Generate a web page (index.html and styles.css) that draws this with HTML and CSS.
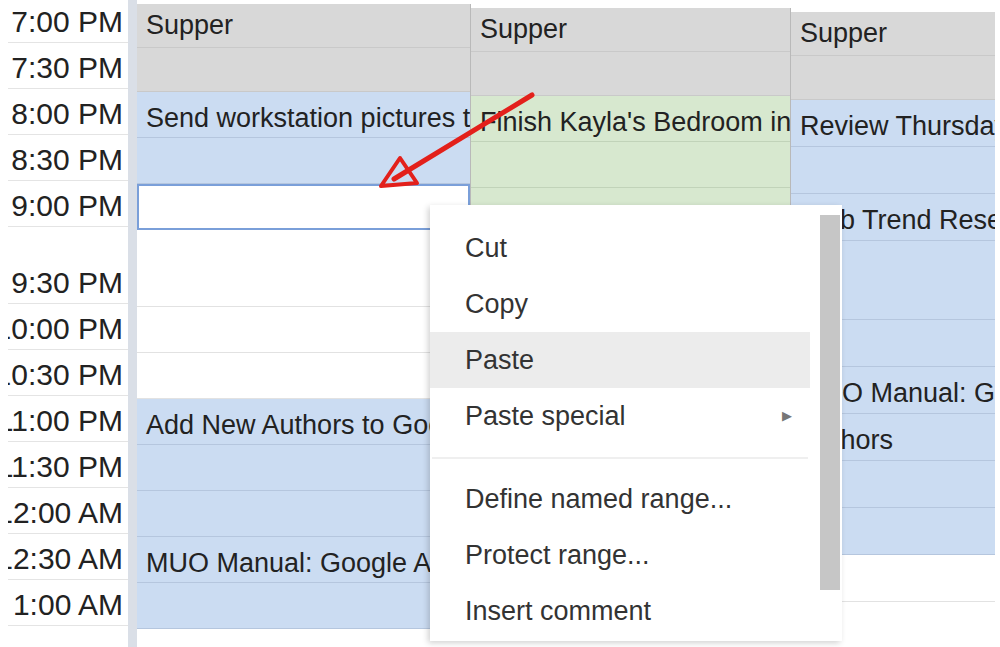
FILE: index.html
```html
<!DOCTYPE html>
<html lang="en">
<head>
    <meta charset="UTF-8">
    <title>Schedule - Paste</title>
    <link rel="stylesheet" href="styles.css">
</head>
<body>

<div class="sheet">
    <!-- time labels -->
    <div class="times">
        <div class="time first">7:00 PM</div>
        <div class="time">7:30 PM</div>
        <div class="time">8:00 PM</div>
        <div class="time">8:30 PM</div>
        <div class="time">9:00 PM</div>
        <div class="time tall">9:30 PM</div>
        <div class="time">10:00 PM</div>
        <div class="time">10:30 PM</div>
        <div class="time">11:00 PM</div>
        <div class="time">11:30 PM</div>
        <div class="time">12:00 AM</div>
        <div class="time">12:30 AM</div>
        <div class="time">1:00 AM</div>
    </div>

    <div class="freeze"></div>

    <div class="col col-a">
        <div class="cell grey hd">Supper</div>
        <div class="cell grey hd"></div>
        <div class="cell blue">Send workstation pictures to Dave</div>
        <div class="cell blue"></div>
        <div class="cell sel"></div>
        <div class="cell tall"></div>
        <div class="cell"></div>
        <div class="cell"></div>
        <div class="cell blue">Add New Authors to Google Docs</div>
        <div class="cell blue"></div>
        <div class="cell blue"></div>
        <div class="cell blue">MUO Manual: Google Apps</div>
        <div class="cell blue"></div>
    </div>

    <div class="col col-b">
        <div class="cell grey hd">Supper</div>
        <div class="cell grey hd"></div>
        <div class="cell green">Finish Kayla's Bedroom in Sims</div>
        <div class="cell green"></div>
        <div class="cell green"></div>
        <div class="cell green tall"></div>
        <div class="cell green"></div>
        <div class="cell"></div>
        <div class="cell"></div>
        <div class="cell"></div>
        <div class="cell"></div>
        <div class="cell"></div>
        <div class="cell"></div>
    </div>

    <div class="col col-c">
        <div class="cell grey hd">Supper</div>
        <div class="cell grey hd"></div>
        <div class="cell blue">Review Thursday's Articles</div>
        <div class="cell blue"></div>
        <div class="cell blue">Web Trend Research</div>
        <div class="cell blue tall"></div>
        <div class="cell blue"></div>
        <div class="cell blue">MUO Manual: Google Apps</div>
        <div class="cell blue">Authors</div>
        <div class="cell blue"></div>
        <div class="cell blue"></div>
        <div class="cell"></div>
        <div class="cell"></div>
    </div>
</div>

<!-- right click menu -->
<div class="menu">
    <div class="menu-list">
        <div class="item">Cut</div>
        <div class="item">Copy</div>
        <div class="item hover">Paste</div>
        <div class="item">Paste special <span class="sub">&#9654;</span></div>
        <div class="sep"></div>
        <div class="item">Define named range...</div>
        <div class="item">Protect range...</div>
        <div class="item">Insert comment</div>
    </div>
    <div class="scroll"><div class="thumb"></div></div>
</div>

<!-- red pointer drawn on the screenshot -->
<svg class="pointer" width="1000" height="647" viewBox="0 0 1000 647">
    <line x1="532" y1="95" x2="394" y2="179" stroke="#e3201b" stroke-width="5" stroke-linecap="round"/>
    <polygon points="381,186 400,158 417,183" fill="none" stroke="#e3201b" stroke-width="4" stroke-linejoin="round"/>
</svg>

</body>
</html>
```

FILE: styles.css
```css
body {
    margin: 0;
    width: 1000px;
    height: 647px;
    overflow: hidden;
    background-color: #fff;
    font-family: 'Liberation Sans', Arial, sans-serif;
    color: #222;
    position: relative;
}

.sheet {
    display: flex;
    align-items: flex-start;
}

/* time column */
.times {
    width: 128px;
    flex-shrink: 0;
    overflow: hidden;
}

.time {
    height: 46px;
    box-sizing: border-box;
    display: flex;
    align-items: flex-end;
    justify-content: flex-end;
    padding-right: 5px;
    line-height: 40px;
    font-size: 30px;
    white-space: nowrap;
    border-bottom: 1px solid #e4e4e4;
    clip-path: inset(0 0 0 8px);
}

.time.first {
    height: 43px;
    line-height: 40px;
}

.time.tall {
    height: 77px;
}

.freeze {
    width: 9px;
    height: 647px;
    flex-shrink: 0;
    background-color: #dadfe7;
}

/* columns */
.col {
    flex-shrink: 0;
    border-right: 1px solid #b9b9b9;
}

.col-a {
    width: 333px;
    margin-top: 4px;
}

.col-b {
    width: 319px;
    margin-top: 8px;
}

.col-c {
    width: 204px;
    margin-top: 12px;
    border-right: none;
}

.col-c .cell {
    height: 47px;
}

.col-c .cell.hd {
    height: 44px;
}

.col-c .cell.tall {
    height: 79px;
}

.cell {
    height: 46px;
    box-sizing: border-box;
    padding-left: 9px;
    font-size: 27px;
    line-height: 52px;
    white-space: nowrap;
    overflow: hidden;
    border-bottom: 1px solid #e2e2e2;
    background-color: #fff;
}

.cell.hd {
    height: 44px;
    line-height: 42px;
}

.cell.tall {
    height: 77px;
}

.grey {
    background-color: #d8d8d8;
    border-bottom-color: #c9c9c9;
}

.blue {
    background-color: #cbdcf2;
    border-bottom-color: #b5c6de;
}

.green {
    background-color: #d7e8cf;
    border-bottom-color: #c1d3b9;
}

.sel {
    border: 2px solid #7a9fd9;
}

/* context menu */
.menu {
    position: absolute;
    left: 430px;
    top: 205px;
    width: 412px;
    height: 436px;
    display: flex;
    background-color: #fff;
    box-shadow: -2px 2px 6px rgba(0, 0, 0, 0.18);
    color: #333;
    font-size: 27px;
}

.menu-list {
    flex: 1;
    padding-top: 15px;
}

.item {
    height: 56px;
    line-height: 56px;
    padding-left: 35px;
    display: flex;
    white-space: nowrap;
}

.item.hover {
    background-color: #ececec;
    margin-right: 10px;
}

.sub {
    margin-left: auto;
    margin-right: 28px;
    font-size: 13px;
    color: #777;
}

.sep {
    height: 13px;
    margin: 0 12px 12px 2px;
    border-bottom: 2px solid #efefef;
}

.scroll {
    width: 20px;
    padding: 10px 2px 0 0;
}

.thumb {
    height: 375px;
    background-color: #c6c6c6;
}

.pointer {
    position: absolute;
    left: 0;
    top: 0;
}
```
